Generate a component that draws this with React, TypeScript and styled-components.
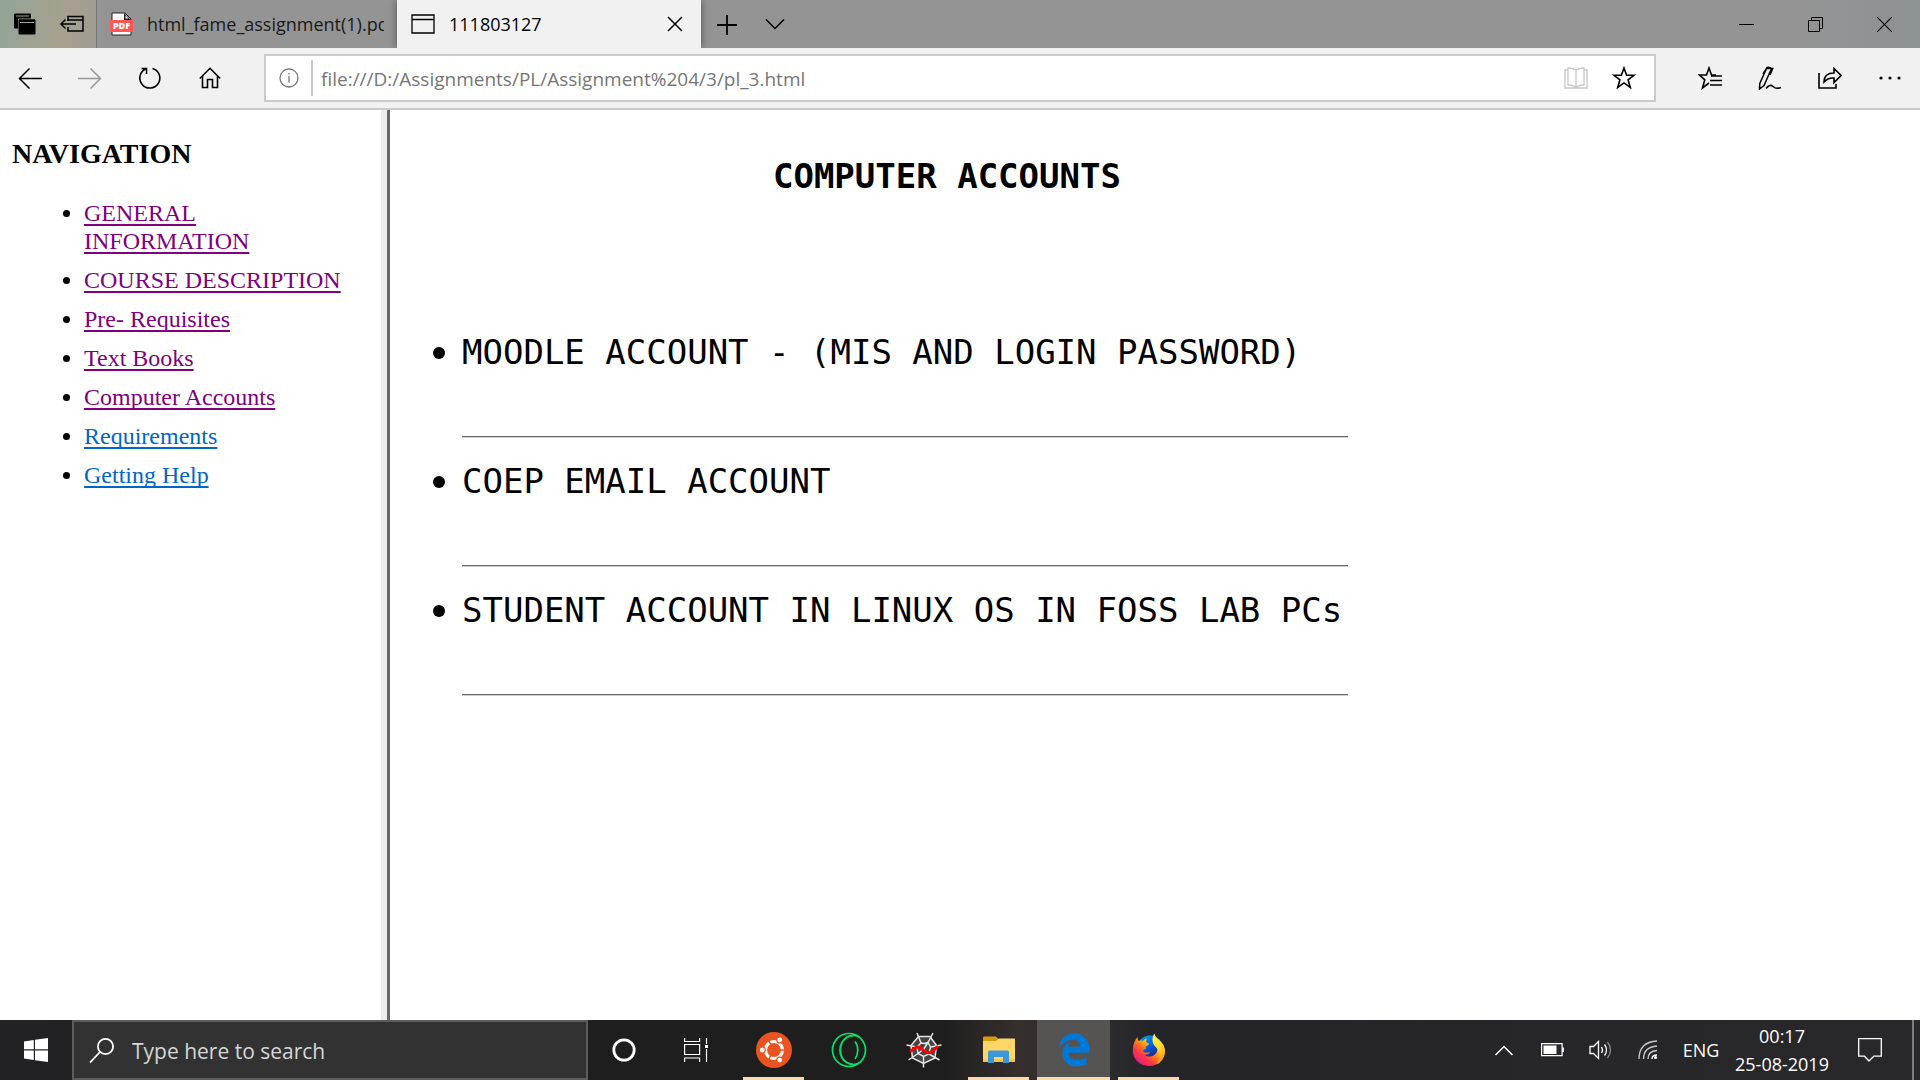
import React from "react";
import styled, { createGlobalStyle, css } from "styled-components";
import { FaEdgeLegacy } from "react-icons/fa";

const UI_FONT = '"Segoe UI", "Open Sans", "Noto Sans", sans-serif';
const SERIF_FONT = '"Times New Roman", "Liberation Serif", serif';
const MONO_FONT = 'Consolas, "DejaVu Sans Mono", monospace';

const GlobalStyle = createGlobalStyle`
  *, *::before, *::after { box-sizing: border-box; }
  html, body, #root { height: 100%; }
  body { margin: 0; background: #fff; color: #000; overflow: hidden; }
  button { border: 0; padding: 0; background: none; color: inherit; font: inherit; }
  svg { display: block; flex: none; }
`;

const Desktop = styled.div`
  display: flex;
  flex-direction: column;
  height: 100%;
  font-family: ${UI_FONT};
`;

/* ---------- Title bar ---------- */

const TitleBar = styled.header`
  display: flex;
  flex: none;
  height: 48px;
  background: linear-gradient(90deg, #949494 0, #949494 94%, #8d9296 100%);
`;

const TabTools = styled.div`
  display: flex;
  align-items: center;
  gap: 24px;
  width: 97px;
  padding-left: 14px;
  border-right: 1px solid #757575;
  background: linear-gradient(100deg, #93a596, #a5a08f 60%, #a19c93);
`;

const Tab = styled.button<{ $active?: boolean }>`
  display: flex;
  align-items: center;
  gap: 14px;
  width: ${(p) => (p.$active ? 304 : 300)}px;
  padding: 0 13px;
  font-size: 18px;
  color: #1a1a1a;
  text-align: left;
  ${(p) =>
    p.$active &&
    css`
      padding-left: 14px;
      background: #f1f1f1;
      color: #000;
      box-shadow: 0 0 8px rgba(0, 0, 0, 0.45);
      clip-path: inset(0 -10px 0 -10px);
    `}
`;

const TabLabel = styled.span`
  flex: 1;
  overflow: hidden;
  white-space: nowrap;
`;

const NewTabTools = styled.div`
  display: flex;
  padding-left: 2px;
`;

const StripButton = styled.button`
  display: grid;
  place-items: center;
  width: 48px;
`;

const WindowControls = styled.div`
  display: flex;
  margin-left: auto;
  padding-right: 1px;
`;

const WindowButton = styled.button`
  display: grid;
  place-items: center;
  width: 69px;
`;

/* ---------- Toolbar ---------- */

const Toolbar = styled.div`
  display: flex;
  flex: none;
  align-items: center;
  height: 62px;
  border-bottom: 2px solid #cbcbcb;
  background: #f1f1f1;
`;

const ToolButton = styled.button<{ $dim?: boolean }>`
  display: grid;
  place-items: center;
  width: 60px;
  height: 60px;
  color: ${(p) => (p.$dim ? "#999" : "#000")};
`;

const AddressBar = styled.form`
  display: flex;
  flex: 1;
  align-items: center;
  height: 48px;
  margin: 0 24px;
  padding-right: 6px;
  border: 2px solid #cbcbcb;
  background: #fff;
`;

const AddressIcon = styled.button<{ $dim?: boolean }>`
  display: grid;
  place-items: center;
  width: 48px;
  color: ${(p) => (p.$dim ? "#c8c8c8" : "#000")};
`;

const SiteInfo = styled(AddressIcon)`
  width: 47px;
  height: 36px;
  border-right: 2px solid #cbcbcb;
  color: #767676;
`;

const AddressInput = styled.input`
  flex: 1;
  min-width: 0;
  padding: 2px 8px 0;
  border: 0;
  outline: 0;
  background: transparent;
  color: #767676;
  font-family: ${UI_FONT};
  font-size: 19px;
`;

/* ---------- Page ---------- */

const Frames = styled.div`
  display: flex;
  flex: 1;
  min-height: 0;
  background: #fff;
`;

const Sidebar = styled.nav`
  flex: 0 0 390px;
  padding: 27px 24px 0 12px;
  border-right: 3px solid #696969;
  box-shadow: inset -6px 0 0 #eee;
  font-family: ${SERIF_FONT};
`;

const SidebarTitle = styled.h2`
  margin: 0;
  font-size: 28px;
  line-height: 34px;
`;

const NavList = styled.ul`
  margin: 28px 0 0;
  padding-left: 72px;
  font-size: 24px;
  line-height: 28px;
`;

const NavItem = styled.li`
  margin-bottom: 11px;
`;

const NavLink = styled.a<{ $visited?: boolean }>`
  color: ${(p) => (p.$visited ? "#800080" : "#0066cc")};
  text-decoration: underline;
  text-decoration-thickness: 2px;
  text-underline-offset: 3px;
  text-decoration-skip-ink: none;
`;

const Content = styled.main`
  flex: 1;
  padding: 44px 22px 0;
  font-family: ${MONO_FONT};
  font-size: 34px;
  line-height: 44px;
`;

const Article = styled.article`
  width: 72%;
`;

const PageTitle = styled.h1`
  margin: 0;
  font-size: 34px;
  line-height: 44px;
  text-align: center;
`;

const AccountList = styled.ul`
  width: 940px;
  margin: 132px 0 0;
  padding-left: 50px;
  list-style: none;
`;

const Account = styled.li`
  position: relative;
  height: 129px;
  white-space: nowrap;
  &::before {
    content: "";
    position: absolute;
    left: -29px;
    top: 17px;
    width: 12px;
    height: 12px;
    border-radius: 50%;
    background: #000;
  }
`;

const Rule = styled.hr`
  margin: 62px 4px 0 0;
  height: 2px;
  border: 0;
  border-top: 1px solid #696969;
  border-bottom: 1px solid #d0d0d0;
`;

/* ---------- Taskbar ---------- */

const Taskbar = styled.footer`
  display: flex;
  flex: none;
  height: 60px;
  background: linear-gradient(
    90deg,
    #222225 0,
    #1e1e1e 31%,
    #1e1e1e 49%,
    #352f2d 53%,
    #2d2c2e 57%,
    #252529 60%,
    #28282b 100%
  );
  color: #fff;
`;

const TaskButton = styled.button<{ $active?: boolean; $open?: boolean }>`
  position: relative;
  display: grid;
  place-items: center;
  width: 73px;
  height: 60px;
  background: ${(p) => (p.$active ? "#565453" : "transparent")};
  &::after {
    content: ${(p) => (p.$open ? '""' : "none")};
    position: absolute;
    left: ${(p) => (p.$active ? 0 : 6)}px;
    right: ${(p) => (p.$active ? 0 : 6)}px;
    bottom: 0;
    height: 3px;
    background: #fbd9ab;
  }
`;

const SystemButton = styled(TaskButton)`
  width: 72px;
`;

const SearchBox = styled.label`
  display: flex;
  align-items: center;
  gap: 18px;
  width: 516px;
  padding-left: 15px;
  border: 2px solid #5c5c5c;
  background: #323232;
`;

const SearchInput = styled.input`
  flex: 1;
  min-width: 0;
  padding: 2px 0 0;
  border: 0;
  outline: 0;
  background: transparent;
  color: #fff;
  font-family: ${UI_FONT};
  font-size: 21px;
  line-height: 32px;
  &::placeholder { color: #d6d6d6; opacity: 1; }
`;

const Apps = styled.div`
  display: flex;
  gap: 2px;
  margin-left: 5px;
`;

const Tray = styled.div`
  display: flex;
  align-items: center;
  margin-left: auto;
`;

const TrayButton = styled.button`
  display: grid;
  place-items: center;
  width: 48px;
  height: 60px;
`;

const Language = styled(TrayButton)`
  width: 58px;
  font-size: 18px;
`;

const Clock = styled.button`
  width: 104px;
  height: 60px;
  font-size: 18px;
  line-height: 28px;
  text-align: center;
`;

const Notifications = styled(TrayButton)`
  width: 72px;
  margin-right: 6px;
`;

const ShowDesktop = styled.button`
  width: 8px;
  height: 60px;
  border-left: 2px solid #7c7c7e;
`;

/* ---------- Icons ---------- */

type LineProps = { w: number; h: number; sw?: number; children: React.ReactNode };

const Line = ({ w, h, sw = 1.5, children }: LineProps) => (
  <svg width={w} height={h} viewBox={`0 0 ${w} ${h}`} fill="none" stroke="currentColor" strokeWidth={sw} aria-hidden="true">
    {children}
  </svg>
);

const SetAsideList = () => (
  <Line w={22} h={22} sw={1}>
    <path d="M.5 1h16v14H.5z" fill="#000" stroke="#000" />
    <path d="M2 3h13" stroke="#9fa395" />
    <path d="M4.500 6h17v15h-17z" fill="#000" stroke="#9fa395" />
    <path d="M5 7h16v14H5z" fill="#000" stroke="#000" />
    <path d="M6 9.500h14" stroke="#9fa395" />
  </Line>
);

const SetAside = () => (
  <Line w={24} h={18}>
    <path d="M8 6V1.500h15V16H8v-4M8 5h15M16 9H1M5.500 4.500L1 9l4.500 4.500" />
  </Line>
);

const PdfFile = () => (
  <svg width="23" height="24" viewBox="0 0 23 24" aria-hidden="true">
    <path d="M2 1h13l6 6v16H2z" fill="#fff" stroke="#222" />
    <path d="M14 1v7h7z" fill="#222" />
    <path d="M15.500 3.500v3h3z" fill="#fff" />
    <rect y="8" width="23" height="12" fill="#ff5757" />
    <text x="11.500" y="17" textAnchor="middle" fontFamily="Open Sans, sans-serif" fontSize="9" fontWeight="800" fill="#fff">PDF</text>
  </svg>
);

const Ubuntu = () => (
  <svg width="36" height="36" viewBox="0 0 36 36" aria-hidden="true">
    <circle cx="18" cy="18" r="18" fill="#e95420" />
    <circle cx="18" cy="18" r="8.500" fill="none" stroke="#fff" strokeWidth="3.200" />
    <g stroke="#e95420" strokeWidth="1.500">
      <path d="M18 18h12M18 18l-6-10.400M18 18l-6 10.400" />
    </g>
    <circle cx="18" cy="18" r="6" fill="#e95420" />
    <g fill="#fff" stroke="#e95420" strokeWidth="1.200">
      <circle cx="6.300" cy="18" r="3" />
      <circle cx="23.800" cy="7.900" r="3" />
      <circle cx="23.800" cy="28.100" r="3" />
    </g>
  </svg>
);

const Opera = () => (
  <svg width="36" height="36" viewBox="0 0 36 36" fill="none" stroke="#0be067" strokeWidth="1.700" aria-hidden="true">
    <circle cx="18" cy="18" r="16.500" />
    <path d="M28 5C20 .5 9 7 9 18s11 17.500 19 13" />
    <path d="M22 4.500C15 2 10 9 10 18s5 16 12 13.500" opacity=".45" />
    <path d="M24 9.500c3.700 4.500 3.700 12.500 0 17.500" />
  </svg>
);

const Spyder = () => (
  <svg width="36" height="36" viewBox="0 0 36 36" fill="none" aria-hidden="true">
    <path d="M12.500 4h11l7.500 9-2 13-11 5-11-5L5 13z" fill="#444" />
    <g stroke="#e4e4e4" strokeWidth="1.500">
      <path d="M15 11L11 1M22 10.500L27 1M24.500 15l11-2M23 22l10.500 6M17.500 24.500v11M12 21.500L2.500 28M11 15L.5 13" />
      <path d="M12.500 4.500h11.500l6.500 9-1.500 12.500-11.500 5.500L6.500 26 5 13.500z" />
      <path d="M15 11q4 1 7-.5l2.500 4.500L23 22l-5.500 2.500L12 21.500 11 15zM17.500 17.500L22 10.500M17.500 17.500L12 21.500M17.500 17.500l5.500 4.500" />
    </g>
    <path d="M5 19c5-5 8-5 12-1s8 4 14-3" stroke="#f00" strokeWidth="3" strokeLinecap="round" />
  </svg>
);

const Folder = () => (
  <svg width="32" height="28" viewBox="0 0 32 28" aria-hidden="true">
    <path d="M0 1.500Q0 .5 1 .5h12l3 3v5H0z" fill="#d99b0b" />
    <path d="M0 5h13l3-2.500h15q1 0 1 1V25q0 1-1 1H1q-1 0-1-1z" fill="#ffd768" />
    <path d="M0 23h32v2q0 1-1 1H1q-1 0-1-1z" fill="#f5c551" />
    <path d="M5 27V16q0-1.500 1.500-1.500h18Q26 14.500 26 16v11h-6v-6h-9v6z" fill="#3b97dc" />
  </svg>
);

const Firefox = () => (
  <svg width="34" height="34" viewBox="0 0 34 34" aria-hidden="true">
    <defs>
      <linearGradient id="fxBody" x1="0.850" y1="0.100" x2="0.150" y2="0.900">
        <stop offset="0.150" stopColor="#ffe226" />
        <stop offset="0.450" stopColor="#ff8a16" />
        <stop offset="0.720" stopColor="#ff3647" />
        <stop offset="1" stopColor="#e31587" />
      </linearGradient>
      <linearGradient id="fxGlobe" x1="0" y1="0" x2="0.600" y2="1">
        <stop offset="0" stopColor="#00b4f0" />
        <stop offset="0.500" stopColor="#0060df" />
        <stop offset="1" stopColor="#20137a" />
      </linearGradient>
      <linearGradient id="fxTail" x1="0" y1="0" x2="0.300" y2="1">
        <stop offset="0" stopColor="#fff44f" />
        <stop offset="0.500" stopColor="#ffe030" />
        <stop offset="1" stopColor="#ff9a1a" />
      </linearGradient>
    </defs>
    <circle cx="18" cy="15.500" r="13" fill="url(#fxGlobe)" />
    <path d="M5.500 4c0 2 .5 3 1.200 4 1.600-.6 3-.6 4.300-.1 1-1.400 2.300-2.300 4-2.700-.8 1.300-1 2.700-.7 4.100l2.700 1.200c-.2 1.500-1.500 2.400-3.400 3.100l.5 2.500c-2 .1-3 1-3 2.200 1.600 2 4.500 1.200 6.900.7-.8 2.300-3 3-5.500 2.700 3.500 3.200 9.500 2.200 12-2.200 2-3.700.7-7.500-1.500-10l8 1.500c4 9-1.500 22-14 22C7 33 .5 25.500.8 17 .9 11 3 7 5.500 4z" fill="url(#fxBody)" />
    <path d="M22.500.5c.5 3.500 3 4.500 5.500 7.200 4 4.300 6 8.800 4.800 13.300-.9 4.500-4 8.500-8 10.500 2.700-5 3.200-9.500 1.200-14.500-1-2.500-5-4.500-5.500-9-.3-3 .5-5.500 2-7.500z" fill="url(#fxTail)" />
  </svg>
);

const STAR = "M12 2l2.600 7.300h7.400l-5.900 4.500 2.200 7.700-6.300-4.600-6.300 4.600 2.200-7.700L2 9.300h7.400z";

const navLinks = [
  { label: "GENERAL INFORMATION", visited: true },
  { label: "COURSE DESCRIPTION", visited: true },
  { label: "Pre- Requisites", visited: true },
  { label: "Text Books", visited: true },
  { label: "Computer Accounts", visited: true },
  { label: "Requirements", visited: false },
  { label: "Getting Help", visited: false },
];

const accounts = [
  "MOODLE ACCOUNT - (MIS AND LOGIN PASSWORD)",
  "COEP EMAIL ACCOUNT",
  "STUDENT ACCOUNT IN LINUX OS IN FOSS LAB PCs",
];

const BrowserTabs = () => (
  <TitleBar>
    <TabTools>
      <button aria-label="Tabs you've set aside"><SetAsideList /></button>
      <button aria-label="Set these tabs aside"><SetAside /></button>
    </TabTools>
    <Tab>
      <PdfFile />
      <TabLabel>html_fame_assignment(1).pdf</TabLabel>
    </Tab>
    <Tab $active>
      <Line w={24} h={20} sw={1.300}>
        <path d="M1 1h22v18H1zM1 5.500h22" />
      </Line>
      <TabLabel>111803127</TabLabel>
      <Line w={26} h={16}><path d="M6 1l14 14M20 1L6 15" /></Line>
    </Tab>
    <NewTabTools>
      <StripButton aria-label="New tab">
        <Line w={20} h={22} sw={1.800}><path d="M10 2v20M0 12h20" /></Line>
      </StripButton>
      <StripButton aria-label="Show tab previews">
        <Line w={20} h={12} sw={1.500}><path d="M1 1.500l9 9 9-9" /></Line>
      </StripButton>
    </NewTabTools>
    <WindowControls>
      <WindowButton aria-label="Minimize"><Line w={15} h={15} sw={1}><path d="M0 7.500h15" /></Line></WindowButton>
      <WindowButton aria-label="Restore">
        <Line w={15} h={15} sw={1}><path d="M.5 3.500h11v11H.5zM3.500 3V.5h11v11H12" /></Line>
      </WindowButton>
      <WindowButton aria-label="Close"><Line w={15} h={15} sw={1.200}><path d="M0 0l15 15M15 0L0 15" /></Line></WindowButton>
    </WindowControls>
  </TitleBar>
);

const BrowserToolbar = () => (
  <Toolbar>
    <ToolButton aria-label="Back"><Line w={24} h={22} sw={1.500}><path d="M24 11.500H1.500M11.500 1.500l-10 10 10 10" /></Line></ToolButton>
    <ToolButton $dim aria-label="Forward"><Line w={24} h={22} sw={1.500}><path d="M0 11.500h22.500M12.500 1.500l10 10-10 10" /></Line></ToolButton>
    <ToolButton aria-label="Refresh">
      <Line w={22} h={22} sw={1.600}><path d="M13.500 1.400A10 10 0 1 1 7 1.800M2.500 1.500H7.500V7" /></Line>
    </ToolButton>
    <ToolButton aria-label="Home">
      <Line w={22} h={22} sw={1.600}><path d="M.8 11.500L11 1.300l10.200 10.200M3.500 9v11.500h5v-8h5v8h5V9" /></Line>
    </ToolButton>
    <AddressBar onSubmit={(e) => e.preventDefault()}>
      <SiteInfo type="button" aria-label="Site information">
        <Line w={20} h={20} sw={1.300}>
          <circle cx="10" cy="10" r="9" />
          <path d="M10 8v6.500M10 5v1.600" />
        </Line>
      </SiteInfo>
      <AddressInput aria-label="Address" defaultValue="file:///D:/Assignments/PL/Assignment%204/3/pl_3.html" />
      <AddressIcon type="button" $dim aria-label="Reading view">
        <Line w={24} h={22} sw={1.300}>
          <path d="M12 3q-3-2-8-2v17q5 0 8 2 3-2 8-2V1q-5 0-8 2zv17M4 3H1v18h22V3h-3" />
        </Line>
      </AddressIcon>
      <AddressIcon type="button" aria-label="Add to favorites">
        <Line w={24} h={24} sw={1.600}><path d={STAR} /></Line>
      </AddressIcon>
    </AddressBar>
    <ToolButton aria-label="Hub">
      <Line w={24} h={24} sw={1.600}>
        <path d="M18 9h-4.500L11 2 8.500 9H1.500l5.300 4.800L4.500 22l6.500-5M13 10h11M12 14.500h12M12 19h12" />
      </Line>
    </ToolButton>
    <ToolButton aria-label="Add notes">
      <Line w={24} h={24} sw={1.500}>
        <path d="M9 1.500q2.500-1 4.500 1L6 19.500 1.500 23l.3-5.500zM5 8l3.500-5.500h6.200L12 9M8 22.500q4-5 7-2t8 1" />
      </Line>
    </ToolButton>
    <ToolButton aria-label="Share">
      <Line w={24} h={22} sw={1.600}>
        <path d="M1 6v15h17v-4M6 15q0-9 10-9V1.500l7 7-7 7V11q-6-.5-10 4z" />
      </Line>
    </ToolButton>
    <ToolButton aria-label="Settings and more">
      <svg width="22" height="4" viewBox="0 0 22 4" aria-hidden="true">
        <circle cx="2" cy="2" r="1.600" /><circle cx="11" cy="2" r="1.600" /><circle cx="20" cy="2" r="1.600" />
      </svg>
    </ToolButton>
  </Toolbar>
);

const SystemTaskbar = () => (
  <Taskbar>
    <SystemButton aria-label="Start">
      <svg width="24" height="24" viewBox="0 0 24 24" fill="#fff" aria-hidden="true">
        <path d="M0 3.400L9.800 2v9.300H0zM11 1.800L24 0v11.300H11zM0 12.500h9.800V22L0 20.600zM11 12.500h13V24l-13-1.800z" />
      </svg>
    </SystemButton>
    <SearchBox>
      <Line w={25} h={25} sw={1.800}><circle cx="16.500" cy="8.500" r="7.600" /><path d="M11 14L1 24.500" /></Line>
      <SearchInput type="search" aria-label="Search" placeholder="Type here to search" />
    </SearchBox>
    <SystemButton aria-label="Cortana"><Line w={24} h={24} sw={2.800}><circle cx="12" cy="12" r="10.200" /></Line></SystemButton>
    <SystemButton aria-label="Task View">
      <Line w={24} h={24} sw={1.200}>
        <path d="M.6 0v3.500h15V0M.6 6.500h15v10H.6zM.6 24v-4h15v4M22.500 0v6M22.500 11v13" />
        <path d="M21 7h3v3h-3z" fill="currentColor" stroke="none" />
      </Line>
    </SystemButton>
    <Apps>
      <TaskButton $open aria-label="Ubuntu"><Ubuntu /></TaskButton>
      <TaskButton aria-label="Opera GX"><Opera /></TaskButton>
      <TaskButton aria-label="Spyder"><Spyder /></TaskButton>
      <TaskButton $open aria-label="File Explorer"><Folder /></TaskButton>
      <TaskButton $open $active aria-label="Microsoft Edge"><FaEdgeLegacy size={34} color="#0078d7" /></TaskButton>
      <TaskButton $open aria-label="Firefox"><Firefox /></TaskButton>
    </Apps>
    <Tray>
      <TrayButton aria-label="Show hidden icons"><Line w={18} h={11} sw={1.500}><path d="M.5 10L9 1.500 17.500 10" /></Line></TrayButton>
      <TrayButton aria-label="Battery">
        <Line w={23} h={14} sw={1.200}>
          <path d="M.6.6h20.500v12H.6zM22.300 4.500v4.500" />
          <path d="M2.500 2.500h13v8.500h-13z" fill="currentColor" stroke="none" />
        </Line>
      </TrayButton>
      <TrayButton aria-label="Volume">
        <Line w={23} h={20} sw={1.300}>
          <path d="M1 6.500h3.500l5-5v17l-5-5H1z" />
          <path d="M12.500 7q2 3 0 6M15.500 4.500q4 5.500 0 11" />
          <path d="M18.500 2q6 8 0 16" opacity=".45" />
        </Line>
      </TrayButton>
      <TrayButton aria-label="Network">
        <Line w={20} h={20} sw={1.300}>
          <path d="M1 19Q1 2 19 1M5.500 19Q5.500 7 19 6M10 19q0-8 9-8.500" opacity=".75" />
          <path d="M14 19q0-4 5-4" />
          <circle cx="17.500" cy="17.500" r="1.600" fill="currentColor" stroke="none" />
        </Line>
      </TrayButton>
      <Language>ENG</Language>
      <Clock><time dateTime="2019-08-25T00:17">00:17<br />25-08-2019</time></Clock>
      <Notifications aria-label="Notifications">
        <Line w={24} h={24} sw={1.300}><path d="M.7.7h22.600v17.500h-7.500L11 23l-4.500-4.800H.7z" /></Line>
      </Notifications>
      <ShowDesktop aria-label="Show desktop" />
    </Tray>
  </Taskbar>
);

export default function App() {
  return (
    <Desktop>
      <GlobalStyle />
      <BrowserTabs />
      <BrowserToolbar />
      <Frames>
        <Sidebar>
          <SidebarTitle>NAVIGATION</SidebarTitle>
          <NavList>
            {navLinks.map((link) => (
              <NavItem key={link.label}>
                <NavLink href="#" $visited={link.visited}>{link.label}</NavLink>
              </NavItem>
            ))}
          </NavList>
        </Sidebar>
        <Content>
          <Article>
            <PageTitle>COMPUTER ACCOUNTS</PageTitle>
            <AccountList>
              {accounts.map((name) => (
                <Account key={name}>
                  {name}
                  <Rule />
                </Account>
              ))}
            </AccountList>
          </Article>
        </Content>
      </Frames>
      <SystemTaskbar />
    </Desktop>
  );
}
